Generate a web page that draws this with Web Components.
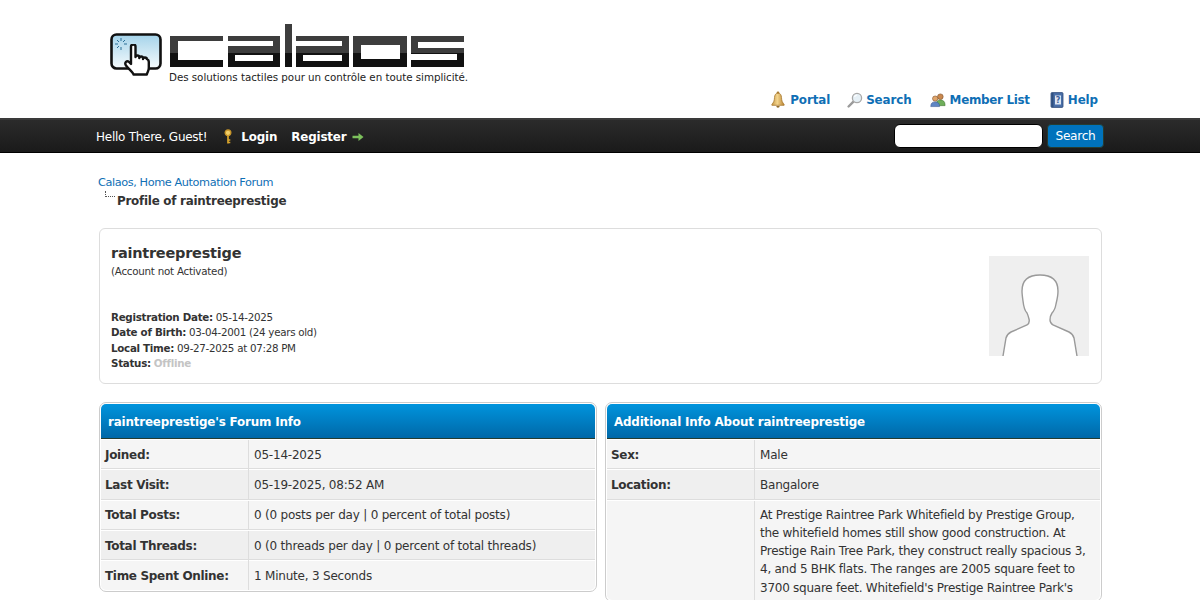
<!DOCTYPE html>
<html lang="en"><head><meta charset="utf-8"><title>Profile of raintreeprestige</title>
<style>
html,body{margin:0;padding:0;height:600px;overflow:hidden;background:#fff}
body{font-family:"DejaVu Sans",Verdana,sans-serif;font-size:12px;color:#333}
</style></head><body>
<cal-header></cal-header>
<cal-panel>
<cal-crumbs></cal-crumbs>
<cal-profile></cal-profile>
<cal-columns>
<cal-table heading="raintreeprestige's Forum Info">
<cal-row label="Joined:">05-14-2025</cal-row>
<cal-row label="Last Visit:" alt>05-19-2025, 08:52 AM</cal-row>
<cal-row label="Total Posts:">0 (0 posts per day | 0 percent of total posts)</cal-row>
<cal-row label="Total Threads:" alt>0 (0 threads per day | 0 percent of total threads)</cal-row>
<cal-row label="Time Spent Online:" last>1 Minute, 3 Seconds</cal-row>
</cal-table>
<cal-table heading="Additional Info About raintreeprestige">
<cal-row label="Sex:">Male</cal-row>
<cal-row label="Location:" alt>Bangalore</cal-row>
<cal-row label="" long>At Prestige Raintree Park Whitefield by Prestige Group,<br>the whitefield homes still show good construction. At<br>Prestige Rain Tree Park, they construct really spacious 3,<br>4, and 5 BHK flats. The ranges are 2005 square feet to<br>3700 square feet. Whitefield's Prestige Raintree Park's</cal-row>
</cal-table>
</cal-columns>
</cal-panel>
<script>
const def=(n,html)=>customElements.define(n,class extends HTMLElement{connectedCallback(){if(this.shadowRoot)return;const r=this.attachShadow({mode:'open'});r.innerHTML=typeof html==='function'?html(this):html;}});
const icons={
bell:`<svg width="16" height="18" viewBox="0 0 16 18"><defs><linearGradient id="b" x1="0" x2="1"><stop offset="0" stop-color="#c89b4a"/><stop offset=".45" stop-color="#f4d58e"/><stop offset="1" stop-color="#b98432"/></linearGradient></defs><circle cx="8" cy="2" r="1.4" fill="#a87a30"/><path d="M8 2.200c-2.600 0-3.400 2-3.500 4.500-.1 3-1 5.100-2.600 6.600v1h12.200v-1c-1.600-1.500-2.500-3.600-2.600-6.600C11.400 4.200 10.600 2.200 8 2.200z" fill="url(#b)" stroke="#a87a30" stroke-width=".8"/><path d="M6.300 15h3.400a1.700 1.700 0 0 1-3.400 0z" fill="#8f6a2b"/></svg>`,
search:`<svg width="16" height="16" viewBox="0 0 16 16"><path d="M6.200 9.800 1.600 14.500" stroke="#9b9b9b" stroke-width="2.400" stroke-linecap="round"/><circle cx="10" cy="6" r="4.600" fill="#e6f0f6" stroke="#a8a8a8" stroke-width="1.300"/><path d="M7.500 5a3 3 0 0 1 2.500-2" stroke="#fff" stroke-width="1.200" fill="none"/></svg>`,
members:`<svg width="16" height="16" viewBox="0 0 17 16"><circle cx="11" cy="4.500" r="3" fill="#c9884f" stroke="#7a4a22" stroke-width=".6"/><path d="M6.500 13c0-3.500 1.800-5 4.500-5s5 1.500 5 5v1h-9.500z" fill="#6fae5a" stroke="#457a38" stroke-width=".6"/><circle cx="5.500" cy="6.500" r="2.800" fill="#e0a56b" stroke="#7a4a22" stroke-width=".6"/><path d="M.8 15c0-3.500 1.700-5 4.700-5s4.700 1.500 4.700 5z" fill="#5f86c4" stroke="#3a5a96" stroke-width=".6"/></svg>`,
help:`<svg width="14" height="16" viewBox="0 0 14 16"><rect x="1" y=".6" width="12" height="14.800" rx="1" fill="#4a6fa8" stroke="#2f4a78" stroke-width=".8"/><rect x="1.500" y="1" width="2" height="14" fill="#30507f"/><rect x="5" y="3.500" width="6" height="9" fill="#dde6f3"/><text x="8" y="11.300" font-family="DejaVu Sans" font-size="8" font-weight="700" text-anchor="middle" fill="#3a5f9a">?</text></svg>`,
key:`<svg width="12" height="16" viewBox="0 0 12 16"><circle cx="6" cy="3.800" r="2.800" fill="#f1cf6a" stroke="#c9962a" stroke-width="1.400"/><path d="M6 6.500v8M6 11h2.300M6 13.500h2.300" stroke="#d9a52c" stroke-width="1.700" fill="none"/></svg>`,
arrow:`<svg width="12" height="10" viewBox="0 0 12 10"><path d="M.5 3.800h6V1l5 4-5 4V6.200h-6z" fill="#7cc05c"/></svg>`};
const navlink=(ic,t,s)=>`<a style="${s}">${icons[ic]}<span>${t}</span></a>`;

def('cal-logo',`<style>:host{display:block;width:370px}svg{display:block}
p{margin:0;padding-left:59px;font:10.3px/14px "DejaVu Sans",sans-serif;letter-spacing:-.03px;color:#222;white-space:nowrap}</style>
<svg width="370" height="46" viewBox="0 0 370 46">
<defs><linearGradient id="g" x1="0" y1="0" x2="0" y2="46" gradientUnits="userSpaceOnUse"><stop offset="0" stop-color="#3d3d3d"/><stop offset=".63" stop-color="#3d3d3d"/><stop offset=".64" stop-color="#111"/><stop offset="1" stop-color="#111"/></linearGradient>
<linearGradient id="s" x1="0" x2="0" y1="0" y2="1"><stop offset="0" stop-color="#a4d3ea"/><stop offset="1" stop-color="#f6fbfd"/></linearGradient></defs>
<g fill="url(#g)" fill-rule="evenodd">
<path d="M60 12h53v5H68v19h45v7H60z"/>
<path d="M118 12h52v31h-52V22h45v-5h-45zM125 31v6h38v-6z" />
<path d="M175 0h7v43h-7z"/>
<path d="M186 12h53v31h-53V22h46v-5h-46zM193 31v6h39v-6z"/>
<path d="M243 12h54v31h-54zM251 21v14h39V21z"/>
<path d="M301 12h53v6h-46v6h46v19h-53v-7h46v-6h-46z"/>
</g>
<rect x="1.500" y="11.500" width="49" height="34" rx="5" fill="url(#s)" stroke="#111" stroke-width="2.600" transform="translate(0 -1)"/>
<g stroke="#2b6f96" stroke-width="1" fill="none"><path d="M11 14v3M11 23v3M5 20h3M14 20h3M7 16l2 2M15 16l-2 2M7 24l2-2"/></g>
</svg>
<p>Des solutions tactiles pour un contrôle en toute simplicité.</p>`);

def('cal-hand',`<style>:host{position:absolute;left:124px;top:44px;width:27px;height:34px}svg{display:block}</style>
<svg width="27" height="34" viewBox="0 0 27 34"><path d="M7 2.500c0-2.700 4.500-2.700 4.500 0V13c0-2 3.800-2 3.800 0v1c0-2 3.700-2 3.700 0v1c0-2 3.800-2 3.800 0 1.300.5 2 1.500 2 3v6c0 3-1.500 4-2 6.500H9.500C9 28 4.500 25 2 21.500c-2-3 1-5.500 3-3.500l2 2z" fill="#fff" stroke="#111" stroke-width="2.400" stroke-linejoin="round"/></svg>`);

def('cal-header',`<style>:host{display:block}
.top{height:118px;display:flex;flex-direction:column;justify-content:space-between;padding:0 102px 9px 110px;box-sizing:border-box;position:relative}
.brand{padding-top:24px;box-sizing:border-box}
nav{display:flex;justify-content:flex-end;align-items:center;gap:18px;height:18px}
nav a{display:flex;align-items:center;color:#0f6fb5;font-weight:700;font-size:11.900px;letter-spacing:-.1px;white-space:nowrap}
svg{display:block;flex:none}
.bar{height:35px;box-sizing:border-box;background:linear-gradient(#2b2b2b,#1a1a1a);border-top:2px solid #3a3a3a;border-bottom:1px solid #000;display:flex;align-items:center;justify-content:space-between;padding:0 96px 0 96px;color:#fff}
.left{display:flex;align-items:center;font-size:12px;letter-spacing:-.26px;margin-top:1px}
.left b{font-size:11.900px;white-space:nowrap;letter-spacing:-.17px}
.left svg{margin:0 7px 0 15px}
.reg{margin-left:14px;display:flex;align-items:center;gap:6px}
.reg svg{margin:0}
form{display:flex;align-items:center;gap:4px}
.in{width:149px;height:24px;box-sizing:border-box;background:#fff;border:1px solid #000;border-radius:6px}
.go{width:57px;height:24px;box-sizing:border-box;background:#0072bc;border:1px solid #263c30;border-radius:4px;color:#fff;font-size:12.200px;letter-spacing:-.3px;display:flex;align-items:center;justify-content:center}
</style>
<div class="top"><div class="brand"><cal-logo></cal-logo><cal-hand></cal-hand></div>
<nav>${navlink('bell','Portal','gap:4px;margin-right:-1px')}${navlink('search','Search','gap:3px')}${navlink('members','Member List','gap:4px;letter-spacing:-.28px')}${navlink('help','Help','gap:4px;margin-left:2px')}</nav></div>
<div class="bar"><div class="left"><span>Hello There, Guest!</span>${icons.key}<b>Login</b><span class="reg"><b>Register</b>${icons.arrow}</span></div>
<form><div class="in"></div><div class="go">Search</div></form></div>`);

def('cal-panel',`<style>:host{display:block;padding:0 98px 0 99px}</style><slot></slot>`);

def('cal-crumbs',`<style>:host{display:block;height:75px;box-sizing:border-box;padding-top:21px;margin-left:-1px}
.a{color:#0f6fb5;font-size:11.300px;line-height:17px;letter-spacing:-.41px}
.b{display:flex;align-items:flex-start;height:21px;font-weight:700;font-size:11.900px;line-height:21px;letter-spacing:-.24px;padding-left:7px;gap:2px}
i{display:block;width:10px;height:6px;border-left:1px dotted #555;border-bottom:1px dotted #555;box-sizing:border-box}
</style><div class="a">Calaos, Home Automation Forum</div><div class="b"><i></i><span>Profile of raintreeprestige</span></div>`);

def('cal-profile',`<style>:host{display:flex;justify-content:space-between;height:156px;box-sizing:border-box;border:1px solid #ddd;border-radius:6px;padding:14px 12px 0 11px;background:#fff;margin-bottom:18px}
h1{margin:0;font-size:14.500px;line-height:20px;font-weight:700;color:#333;letter-spacing:-.24px}
.s{font-size:10.300px;line-height:16px;height:47px;letter-spacing:-.24px}
.d{font-size:10.300px;line-height:15.300px;letter-spacing:-.28px}
b{font-weight:700}
.off{color:#c4c4c4;font-weight:700}
.av{width:100px;height:100px;background:#efefef;margin-top:13px;flex:none}
svg{display:block}
</style>
<div><h1>raintreeprestige</h1><div class="s">(Account not Activated)</div>
<div class="d"><b>Registration Date:</b> 05-14-2025<br><b>Date of Birth:</b> 03-04-2001 (24 years old)<br><b>Local Time:</b> 09-27-2025 at 07:28 PM<br><b>Status:</b> <span class="off">Offline</span></div></div>
<div class="av"><svg width="100" height="100" viewBox="0 0 100 100"><path d="M14 100 17 82Q18 78 22 76L38 69Q41 67 40 63 39 59 38 57 35 54 34 45 33 38 33 35 33 19 51 19 69 19 69 35 69 40 67 48 66 54 63 57 61 60 61 64 61 67 64 69L80 76Q84 78 85 82L88 100z" fill="#fff"/><path d="M14 100 17 82Q18 78 22 76L38 69Q41 67 40 63 39 59 38 57 35 54 34 45 33 38 33 35 33 19 51 19 69 19 69 35 69 40 67 48 66 54 63 57 61 60 61 64 61 67 64 69L80 76Q84 78 85 82L88 100" fill="none" stroke="#9a9a9a" stroke-width="1.400"/></svg></div>`);

def('cal-columns',`<style>:host{display:grid;grid-template-columns:498px 497px;gap:8px;align-items:start}</style><slot></slot>`);

def('cal-table',h=>`<style>:host{display:block;border:1px solid #ccc;border-radius:7px;padding:1px;background:#fff}
.h{height:35px;box-sizing:border-box;background:linear-gradient(#0094dd,#0068a8);border-bottom:1px solid #263c30;border-radius:5px 5px 0 0;color:#fff;font-weight:700;font-size:11.900px;line-height:37px;letter-spacing:-.17px;padding-left:7px}
.r{border-radius:0 0 5px 5px;overflow:hidden}</style>
<div class="h">${h.getAttribute('heading')}</div><div class="r"><slot></slot></div>`);

def('cal-row',h=>{const alt=h.hasAttribute('alt'),last=h.hasAttribute('last');const long=h.hasAttribute('long');
return `<style>:host{display:grid;grid-template-columns:148px 1fr;background:${alt?'#efefef':'#f5f5f5'};${long?'height:100px;':'height:30.250px;'}box-sizing:border-box;border-bottom:${last||long?'0':'1px solid #ddd'};border-top:1px solid #fff;font-size:12px}
.l{border-right:1px solid #ddd;font-weight:700;padding:${long?'5px':'.78px'} 4px 0;line-height:29px;white-space:nowrap;letter-spacing:-.32px}
.v{padding:${long?'5px':'.78px'} 5px 0;${long?'line-height:18.300px;letter-spacing:-.25px;':'line-height:29px;letter-spacing:-.21px;'}white-space:nowrap;color:#333}</style>
<div class="l">${h.getAttribute('label')}</div><div class="v"><slot></slot></div>`});
</script>
</body></html>
